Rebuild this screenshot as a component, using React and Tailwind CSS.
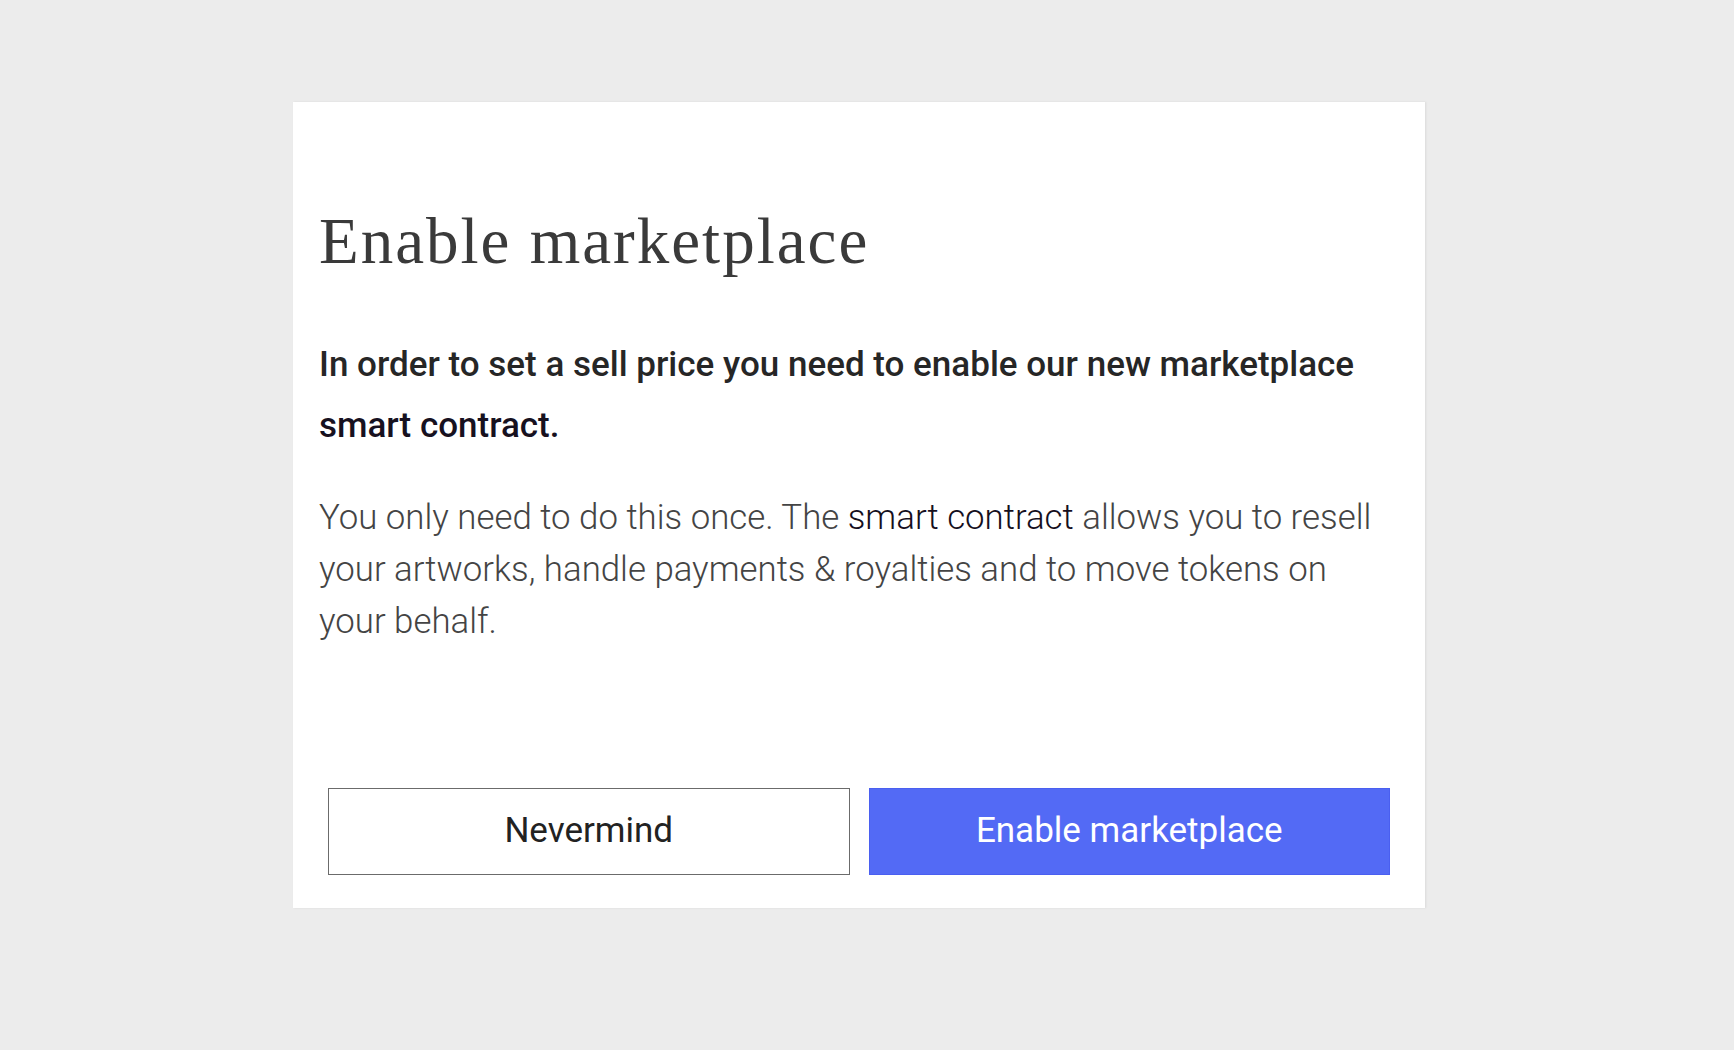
export default function App() {
  return (
    <div className="min-h-[1050px] w-full bg-[#ececec] pt-[102px] pl-[293px]">
      <div className="w-[1132px] bg-white shadow-[1px_0_2px_rgba(0,0,0,0.08)] pt-[107px] pb-[33px]">
        <div className="pl-[26px] pr-[40px]">
          <h1 className="font-['Liberation_Serif',serif] text-[65px] leading-[65px] font-normal tracking-[2px] text-[#3a3a3a]">
            Enable marketplace
          </h1>
          <p className="mt-[60px] font-['Roboto',sans-serif] text-[35px] leading-[61px] font-medium text-[#262626]">
            In order to set a sell price you need to enable our new marketplace{' '}
            <span className="text-[#17111f]">smart contract.</span>
          </p>
          <p className="mt-[35px] font-['Roboto',sans-serif] text-[34.8px] leading-[52px] font-light text-[#444]">
            You only need to do this once. The{' '}
            <span className="text-[#150f1d]">smart contract</span> allows you to resell your
            artworks, handle payments &amp; royalties and to move tokens on your behalf.
          </p>
        </div>
        <div className="mt-[141px] px-[35px] grid grid-cols-2 gap-[19px]">
          <button className="h-[87px] border-[1.5px] border-[#6b6b6b] bg-white font-['Roboto',sans-serif] text-[35px] text-[#222]">
            Nevermind
          </button>
          <button className="h-[87px] bg-[#536af5] border border-[#4a5ff0] font-['Roboto',sans-serif] text-[35px] text-white">
            Enable marketplace
          </button>
        </div>
      </div>
    </div>
  );
}
